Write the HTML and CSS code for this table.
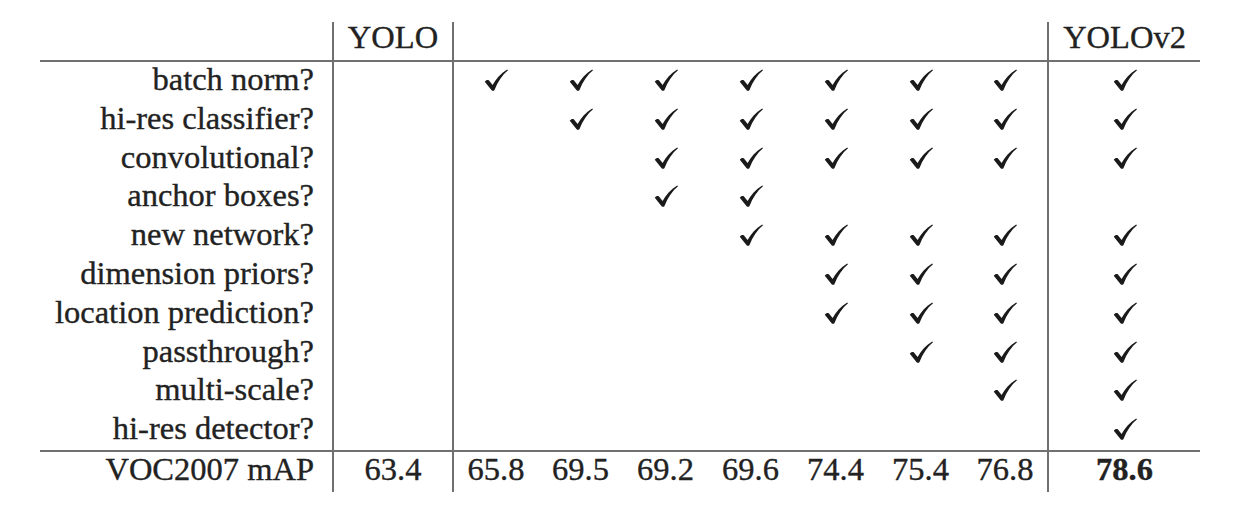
FILE: index.html
```html
<!DOCTYPE html>
<html lang="en">
<head>
<meta charset="utf-8">
<title>YOLO to YOLOv2</title>
<link rel="stylesheet" href="styles.css">
</head>
<body>
<svg class="defs" width="0" height="0" aria-hidden="true">
  <defs>
    <symbol id="ck" viewBox="0 0 24 22">
      <path d="M0.8 12.8 C1.9 11.2 3.6 10.7 5 11.5 L8.6 16 C11.8 10 16.6 4.4 23.2 0.4 L24 1.3 C18.4 5.9 13.8 12.6 10.4 21.3 C9.7 22 8.3 22 7.6 21.2 Z"/>
    </symbol>
  </defs>
</svg>
<table class="ablation">
  <colgroup>
    <col class="c-label"><col class="c-yolo">
    <col class="c-step"><col class="c-step"><col class="c-step"><col class="c-step"><col class="c-step"><col class="c-step"><col class="c-step">
    <col class="c-v2">
  </colgroup>
  <thead>
    <tr class="head">
      <th></th><th class="sep">YOLO</th><th class="sep" colspan="7"></th><th class="sep">YOLOv2</th>
    </tr>
  </thead>
  <tbody>
    <tr><th>batch norm?</th><td class="sep"></td><td class="sep"><svg class="ck"><use href="#ck"/></svg></td><td><svg class="ck"><use href="#ck"/></svg></td><td><svg class="ck"><use href="#ck"/></svg></td><td><svg class="ck"><use href="#ck"/></svg></td><td><svg class="ck"><use href="#ck"/></svg></td><td><svg class="ck"><use href="#ck"/></svg></td><td><svg class="ck"><use href="#ck"/></svg></td><td class="sep"><svg class="ck"><use href="#ck"/></svg></td></tr>
    <tr><th>hi-res classifier?</th><td class="sep"></td><td class="sep"></td><td><svg class="ck"><use href="#ck"/></svg></td><td><svg class="ck"><use href="#ck"/></svg></td><td><svg class="ck"><use href="#ck"/></svg></td><td><svg class="ck"><use href="#ck"/></svg></td><td><svg class="ck"><use href="#ck"/></svg></td><td><svg class="ck"><use href="#ck"/></svg></td><td class="sep"><svg class="ck"><use href="#ck"/></svg></td></tr>
    <tr><th>convolutional?</th><td class="sep"></td><td class="sep"></td><td></td><td><svg class="ck"><use href="#ck"/></svg></td><td><svg class="ck"><use href="#ck"/></svg></td><td><svg class="ck"><use href="#ck"/></svg></td><td><svg class="ck"><use href="#ck"/></svg></td><td><svg class="ck"><use href="#ck"/></svg></td><td class="sep"><svg class="ck"><use href="#ck"/></svg></td></tr>
    <tr><th>anchor boxes?</th><td class="sep"></td><td class="sep"></td><td></td><td><svg class="ck"><use href="#ck"/></svg></td><td><svg class="ck"><use href="#ck"/></svg></td><td></td><td></td><td></td><td class="sep"></td></tr>
    <tr><th>new network?</th><td class="sep"></td><td class="sep"></td><td></td><td></td><td><svg class="ck"><use href="#ck"/></svg></td><td><svg class="ck"><use href="#ck"/></svg></td><td><svg class="ck"><use href="#ck"/></svg></td><td><svg class="ck"><use href="#ck"/></svg></td><td class="sep"><svg class="ck"><use href="#ck"/></svg></td></tr>
    <tr><th>dimension priors?</th><td class="sep"></td><td class="sep"></td><td></td><td></td><td></td><td><svg class="ck"><use href="#ck"/></svg></td><td><svg class="ck"><use href="#ck"/></svg></td><td><svg class="ck"><use href="#ck"/></svg></td><td class="sep"><svg class="ck"><use href="#ck"/></svg></td></tr>
    <tr><th>location prediction?</th><td class="sep"></td><td class="sep"></td><td></td><td></td><td></td><td><svg class="ck"><use href="#ck"/></svg></td><td><svg class="ck"><use href="#ck"/></svg></td><td><svg class="ck"><use href="#ck"/></svg></td><td class="sep"><svg class="ck"><use href="#ck"/></svg></td></tr>
    <tr><th>passthrough?</th><td class="sep"></td><td class="sep"></td><td></td><td></td><td></td><td></td><td><svg class="ck"><use href="#ck"/></svg></td><td><svg class="ck"><use href="#ck"/></svg></td><td class="sep"><svg class="ck"><use href="#ck"/></svg></td></tr>
    <tr><th>multi-scale?</th><td class="sep"></td><td class="sep"></td><td></td><td></td><td></td><td></td><td></td><td><svg class="ck"><use href="#ck"/></svg></td><td class="sep"><svg class="ck"><use href="#ck"/></svg></td></tr>
    <tr><th>hi-res detector?</th><td class="sep"></td><td class="sep"></td><td></td><td></td><td></td><td></td><td></td><td></td><td class="sep"><svg class="ck"><use href="#ck"/></svg></td></tr>
  </tbody>
  <tfoot>
    <tr class="result">
      <th>VOC2007 mAP</th><td class="sep">63.4</td><td class="sep">65.8</td><td>69.5</td><td>69.2</td><td>69.6</td><td>74.4</td><td>75.4</td><td>76.8</td><td class="sep best">78.6</td>
    </tr>
  </tfoot>
</table>
</body>
</html>
```

FILE: styles.css
```css
html, body {
  margin: 0;
  padding: 0;
  background: #ffffff;
}

body {
  font-family: "Liberation Serif", Tinos, "Times New Roman", Times, "DejaVu Serif", serif;
  color: #222222;
}

.defs {
  position: absolute;
  width: 0;
  height: 0;
  overflow: hidden;
}

.ablation {
  margin: 22px 0 0 40px;
  border-collapse: collapse;
  table-layout: fixed;
  width: 1160px;
  font-family: "Liberation Serif", Tinos, "Times New Roman", Times, "DejaVu Serif", serif;
  font-size: 32.5px;
  -webkit-text-stroke: 0.35px #222222;
}

.c-label { width: 293px; }
.c-yolo { width: 120px; }
.c-step { width: 85px; }
.c-v2 { width: 152px; }

.ablation th,
.ablation td {
  padding: 0;
  font-family: inherit;
  font-weight: normal;
  text-align: center;
  vertical-align: top;
  line-height: 34px;
  height: 38.8px;
  white-space: nowrap;
}

.ablation tbody th,
.ablation tfoot th {
  text-align: right;
  padding-right: 18px;
}

.ablation .sep {
  border-left: 2px solid #707070;
}

.ablation thead tr {
  border-bottom: 2px solid #707070;
}

.ablation thead th {
  height: 38px;
  line-height: 30px;
}

.ablation tfoot tr {
  border-top: 2px solid #707070;
}

.ablation tfoot th,
.ablation tfoot td {
  height: 40px;
}

.ablation .best {
  font-weight: bold;
}

.ck {
  width: 24px;
  height: 22px;
  fill: #1a1a1a;
  vertical-align: baseline;
  margin-bottom: -1px;
}
```
